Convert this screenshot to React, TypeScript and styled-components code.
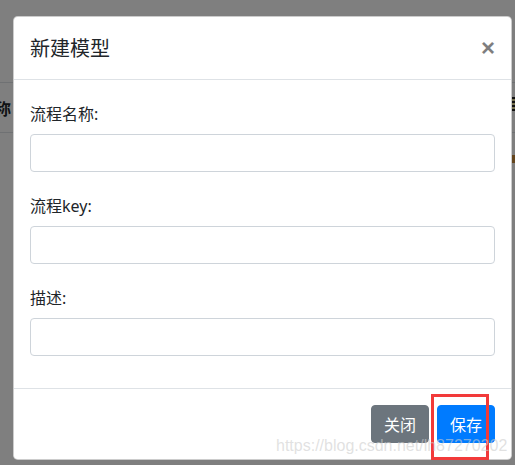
import styled, { createGlobalStyle } from "styled-components";

const GlobalStyle = createGlobalStyle`
  html, body {
    margin: 0;
    padding: 0;
    background: #ffffff;
  }
  body {
    font-family: "Noto Sans", "Noto Sans CJK SC", sans-serif;
    color: #212529;
  }
  * {
    box-sizing: border-box;
  }
`;

const Page = styled.div`
  position: relative;
  width: 515px;
  height: 465px;
  overflow: hidden;
  background: #ffffff;
`;

const BehindPage = styled.div`
  padding-top: 82px;
`;

const TableHead = styled.div`
  display: flex;
  justify-content: space-between;
  align-items: center;
  height: 51px;
  border-top: 1px solid #dee2e6;
  border-bottom: 1px solid #dee2e6;
`;

const HeadCell = styled.div`
  margin-left: -21px;
  font-family: "Noto Sans CJK SC", sans-serif;
  font-size: 16px;
  font-weight: 700;
  line-height: 24px;
`;

const SortIcon = styled.div`
  width: 10px;
  height: 14px;
  margin-right: -7px;
  margin-top: -8px;
  background: repeating-linear-gradient(
    to bottom,
    #222 0 2px,
    #f1e5a0 2px 4px
  );
`;

const TableRow = styled.div`
  display: flex;
  justify-content: flex-end;
  padding-top: 22px;
`;

const Tag = styled.div`
  width: 10px;
  height: 8px;
  margin-right: -7px;
  background: #c98a3a;
`;

const Backdrop = styled.div`
  position: absolute;
  inset: 0;
  background: rgba(0, 0, 0, 0.5);
`;

const ModalLayer = styled.div`
  position: absolute;
  inset: 0;
  padding: 16px 0 0 13px;
`;

const Modal = styled.div`
  width: 499px;
  background: #ffffff;
  border: 1px solid rgba(0, 0, 0, 0.2);
  border-radius: 4.8px;
  display: flex;
  flex-direction: column;
`;

const Header = styled.div`
  display: flex;
  align-items: flex-start;
  justify-content: space-between;
  padding: 16px;
  border-bottom: 1px solid #dee2e6;
`;

const Title = styled.h5`
  margin: 0;
  font-family: "Noto Sans CJK SC", sans-serif;
  font-size: 20px;
  font-weight: 400;
  line-height: 30px;
  color: #212529;
`;

const CloseButton = styled.button`
  margin: -16px -16px -16px auto;
  padding: 16px;
  background: transparent;
  border: 0;
  font-family: "Liberation Sans", Arial, sans-serif;
  font-size: 24px;
  font-weight: 700;
  line-height: 30px;
  color: #000;
  opacity: 0.5;
  cursor: pointer;
`;

const Body = styled.div`
  padding: 16px;
`;

const FormGroup = styled.div`
  padding-top: 6px;
  margin-bottom: 16px;
`;

const Label = styled.label`
  display: block;
  margin-bottom: 8px;
  font-family: "Noto Sans", "Noto Sans CJK SC", sans-serif;
  font-size: 16px;
  line-height: 24px;
  color: #212529;
`;

const Input = styled.input`
  display: block;
  width: 100%;
  height: 38px;
  padding: 6px 12px;
  font-size: 16px;
  border: 1px solid #ced4da;
  border-radius: 4px;
  background: #ffffff;
  outline: none;
`;

const Footer = styled.div`
  display: flex;
  justify-content: flex-end;
  align-items: center;
  padding: 12px;
  border-top: 1px solid #dee2e6;
`;

const Button = styled.button<{ $variant: "secondary" | "primary" }>`
  margin: 4px;
  padding: 6px 12px;
  font-family: "Noto Sans CJK SC", sans-serif;
  font-size: 16px;
  line-height: 24px;
  color: #ffffff;
  border-radius: 4px;
  border: 1px solid
    ${(p) => (p.$variant === "primary" ? "#007bff" : "#6c757d")};
  background: ${(p) => (p.$variant === "primary" ? "#007bff" : "#6c757d")};
  cursor: pointer;
`;

const Highlight = styled.div`
  position: absolute;
  left: 431px;
  top: 394px;
  width: 58px;
  height: 66px;
  border: 3px solid #f23a3a;
  pointer-events: none;
`;

const Watermark = styled.div`
  position: absolute;
  left: 276px;
  top: 438px;
  font-family: "Liberation Sans", Arial, sans-serif;
  font-size: 16px;
  line-height: 16px;
  color: rgba(205, 205, 205, 0.6);
  white-space: nowrap;
  pointer-events: none;
`;

const fields = ["流程名称:", "流程key:", "描述:"];

export default function App() {
  return (
    <Page>
      <GlobalStyle />
      <BehindPage>
        <TableHead>
          <HeadCell>名称</HeadCell>
          <SortIcon />
        </TableHead>
        <TableRow>
          <Tag />
        </TableRow>
      </BehindPage>
      <Backdrop />
      <ModalLayer>
        <Modal>
          <Header>
            <Title>新建模型</Title>
            <CloseButton aria-label="Close">×</CloseButton>
          </Header>
          <Body>
            {fields.map((f) => (
              <FormGroup key={f}>
                <Label>{f}</Label>
                <Input />
              </FormGroup>
            ))}
          </Body>
          <Footer>
            <Button $variant="secondary">关闭</Button>
            <Button $variant="primary">保存</Button>
          </Footer>
        </Modal>
      </ModalLayer>
      <Highlight />
      <Watermark>https://blog.csdn.net/lh87270202</Watermark>
    </Page>
  );
}
